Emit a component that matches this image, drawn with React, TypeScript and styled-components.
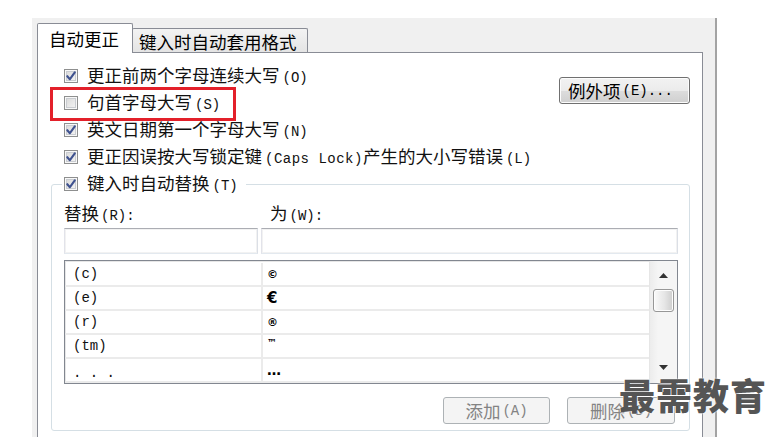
import React from 'react';
import styled, { createGlobalStyle, css } from 'styled-components';

const GlobalStyle = createGlobalStyle`
  html, body {
    margin: 0;
    padding: 0;
    background: #fff;
    overflow: hidden;
  }
  body {
    font-family: "Noto Sans CJK SC", "Noto Sans", sans-serif;
    color: #111;
  }
`;

const Stage = styled.div`
  position: relative;
  width: 777px;
  height: 437px;
  padding: 18px 0 0 32px;
  box-sizing: border-box;
`;

const Window = styled.div`
  width: 685px;
  height: 430px;
  box-sizing: border-box;
  background: #f0f0f0;
  border-right: 2px solid #a3a3a3;
  padding: 5px 12px 0 5px;
  display: flex;
  flex-direction: column;
`;

const TabStrip = styled.div`
  display: flex;
  align-items: flex-end;
  height: 30px;
  position: relative;
  z-index: 1;
  margin-bottom: -1px;
`;

const Tab = styled.div<{ $active?: boolean }>`
  box-sizing: border-box;
  display: flex;
  align-items: center;
  font-size: 17.5px;
  line-height: 1;
  color: #000;
  border: 1px solid #898c95;
  border-bottom: none;
  border-radius: 2px 2px 0 0;
  ${p => p.$active
    ? css`
        height: 30px;
        width: 96px;
        padding-left: 11px;
        background: #fff;
        position: relative;
        z-index: 2;
      `
    : css`
        height: 24px;
        width: 176px;
        margin-left: -1px;
        margin-bottom: 1px;
        padding: 2px 0 0 6px;
        background: linear-gradient(#f3f3f3, #e4e4e4);
      `}
`;

const Panel = styled.div`
  position: relative;
  flex: 1;
  background: #fff;
  border: 1px solid #898c95;
  border-bottom: none;
  padding: 9px 12px 0 13px;
`;

const TopArea = styled.div`
  display: flex;
  justify-content: space-between;
  align-items: flex-start;
`;

const CheckList = styled.div`
  display: flex;
  flex-direction: column;
  padding-left: 13px;
`;

const CheckRow = styled.div<{ $legend?: boolean }>`
  display: flex;
  align-items: center;
  gap: 9px;
  height: 27px;
  font-size: 17.5px;
  line-height: 1;
  white-space: nowrap;
  ${p => p.$legend && css`
    align-self: flex-start;
    margin: -15px 0 0 -2px;
    padding: 0 8px 0 2px;
    background: #fff;
  `}
`;

const Box = styled.span`
  width: 14px;
  height: 14px;
  box-sizing: border-box;
  flex: none;
  border: 1px solid #8e8f8f;
  background: linear-gradient(135deg, #d6d6d6, #f7f7f7);
  box-shadow: inset 0 0 0 1px #f8f8f8, inset 0 0 0 2px #c9ccd1;
  display: flex;
  align-items: center;
  justify-content: center;
`;

const Acc = styled.span<{ $gap?: number }>`
  font-family: "Liberation Mono", monospace;
  font-size: 14px;
  margin-left: ${p => p.$gap ?? 3}px;
`;

const Caps = styled(Acc)`
  letter-spacing: 0.5px;
`;

const Button = styled.div<{ $disabled?: boolean; $w: number }>`
  box-sizing: border-box;
  width: ${p => p.$w}px;
  height: 27px;
  border-radius: 3px;
  display: flex;
  align-items: center;
  font-size: 17.5px;
  line-height: 1;
  white-space: nowrap;
  ${p => p.$disabled
    ? css`
        border: 1px solid #adb2b5;
        background: #f4f4f4;
        color: #838383;
        justify-content: center;
      `
    : css`
        border: 1px solid #707070;
        background: linear-gradient(#f2f2f2 0%, #ebebeb 50%, #dddddd 51%, #cfcfcf 100%);
        box-shadow: inset 0 0 0 1px #fcfcfc;
        color: #000;
        padding-left: 8px;
      `}
`;

const ExceptionButton = styled(Button)`
  margin-top: 15px;
`;

const Group = styled.div`
  margin-top: 14px;
  border: 1px solid #d5dfe5;
  border-radius: 3px;
  padding: 0 11px 6px 12px;
  display: flex;
  flex-direction: column;
`;

const Labels = styled.div`
  margin-top: 6px;
  height: 20px;
  display: grid;
  grid-template-columns: 206px 1fr;
  align-items: center;
  font-size: 17.5px;
  line-height: 1;
`;

const Inputs = styled.div`
  margin-top: 5px;
  display: flex;
  gap: 3px;
`;

const Field = styled.div<{ $w?: number }>`
  box-sizing: border-box;
  height: 26px;
  ${p => (p.$w ? `width: ${p.$w}px;` : 'flex: 1;')}
  border: 1px solid #abadb3;
  border-color: #abadb3 #dbdfe6 #e3e9ef #e2e3ea;
  box-shadow: inset 0 0 0 1px #f2f2f2;
  background: #fff;
`;

const ListBox = styled.div`
  margin-top: 6px;
  height: 124px;
  box-sizing: border-box;
  border: 1px solid #828790;
  box-shadow: inset 0 0 0 1px #e6e6e6;
  display: flex;
  background: #fff;
`;

const Table = styled.div`
  flex: 1;
  padding-top: 2px;
`;

const ListRow = styled.div`
  display: grid;
  grid-template-columns: 198px 1fr;
  height: 24px;
  box-sizing: border-box;
  border-bottom: 2px solid #ebebeb;
`;

const FromCell = styled.div<{ $bottom?: boolean }>`
  display: flex;
  align-items: ${p => (p.$bottom ? 'flex-end' : 'center')};
  padding: 0 0 ${p => (p.$bottom ? 1 : 0)}px 8px;
  border-right: 2px solid #ebebeb;
  font-family: "Liberation Mono", monospace;
  font-size: 14px;
  line-height: 1;
  color: #111;
`;

const ToCell = styled.div<{ $size: number; $top?: boolean }>`
  display: flex;
  align-items: ${p => (p.$top ? 'flex-start' : 'center')};
  padding: ${p => (p.$top ? 3 : 0)}px 0 0 4px;
  font-family: "DejaVu Sans", sans-serif;
  font-weight: bold;
  font-size: ${p => p.$size}px;
  line-height: 1;
  color: #000;
`;

const ScrollBar = styled.div`
  width: 27px;
  flex: none;
  display: flex;
  flex-direction: column;
  align-items: center;
  border-left: 1px solid #e6e6e6;
  background: linear-gradient(90deg, #ececec, #f5f5f5 30%, #f5f5f5);
`;

const Arrow = styled.svg<{ $down?: boolean }>`
  flex: none;
  ${p => (p.$down ? 'margin: auto 0 13px;' : 'margin-top: 12px;')}
`;

const Thumb = styled.div`
  margin-top: 11px;
  width: 21px;
  height: 23px;
  box-sizing: border-box;
  border: 1px solid #979797;
  border-radius: 3px;
  background: linear-gradient(90deg, #fafafa, #e6e6e6 55%, #cdcdcd);
  box-shadow: inset 0 0 0 1px #fdfdfd;
`;

const Actions = styled.div`
  margin-top: 13px;
  display: flex;
  justify-content: flex-end;
  gap: 17px;
  padding-right: 3px;
`;

const Highlight = styled.div`
  position: absolute;
  left: 12px;
  top: 34px;
  width: 186px;
  height: 34px;
  box-sizing: border-box;
  border: 3px solid #e3202a;
  pointer-events: none;
`;

const Watermark = styled.div`
  position: absolute;
  left: 619px;
  top: 376px;
  font-family: "Noto Sans CJK SC", sans-serif;
  font-weight: 900;
  font-size: 36px;
  line-height: 36px;
  letter-spacing: 1px;
  color: #555;
  text-shadow: 0 0 2px #fff, 0 0 1px #fff;
`;

const Check = ({ on }: { on?: boolean }) => (
  <Box>
    {on && (
      <svg width="12" height="12" viewBox="0 0 12 12">
        <path d="M2.3 6.2 L4.9 9.2 L9.8 2.4" fill="none" stroke="#3f528f" strokeWidth="2.1" strokeLinecap="round" strokeLinejoin="round" />
      </svg>
    )}
  </Box>
);

const rows = [
  { from: '(c)', to: '©', size: 11 },
  { from: '(e)', to: '€', size: 15 },
  { from: '(r)', to: '®', size: 11 },
  { from: '(tm)', to: '™', size: 10, top: true },
  { from: '. . .', to: '…', size: 14, bottom: true },
];

export default function App() {
  return (
    <Stage>
      <GlobalStyle />
      <Window>
        <TabStrip>
          <Tab $active>自动更正</Tab>
          <Tab>键入时自动套用格式</Tab>
        </TabStrip>
        <Panel>
          <TopArea>
            <CheckList>
              <CheckRow>
                <Check on />
                <span>更正前两个字母连续大写<Acc>(O)</Acc></span>
              </CheckRow>
              <CheckRow>
                <Check />
                <span>句首字母大写<Acc>(S)</Acc></span>
              </CheckRow>
              <CheckRow>
                <Check on />
                <span>英文日期第一个字母大写<Acc>(N)</Acc></span>
              </CheckRow>
              <CheckRow>
                <Check on />
                <span>更正因误按大写锁定键<Caps>(Caps Lock)</Caps>产生的大小写错误<Acc>(L)</Acc></span>
              </CheckRow>
            </CheckList>
            <ExceptionButton $w={131}>
              例外项<Acc $gap={2}>(E)...</Acc>
            </ExceptionButton>
          </TopArea>

          <Group>
            <CheckRow $legend>
              <Check on />
              <span>键入时自动替换<Acc>(T)</Acc></span>
            </CheckRow>
            <Labels>
              <span>替换<Acc $gap={2}>(R):</Acc></span>
              <span>为<Acc $gap={2}>(W):</Acc></span>
            </Labels>
            <Inputs>
              <Field $w={194} />
              <Field />
            </Inputs>
            <ListBox>
              <Table>
                {rows.map(r => (
                  <ListRow key={r.from}>
                    <FromCell $bottom={r.bottom}>{r.from}</FromCell>
                    <ToCell $size={r.size} $top={r.top}>{r.to}</ToCell>
                  </ListRow>
                ))}
              </Table>
              <ScrollBar>
                <Arrow width="9" height="5" viewBox="0 0 9 5">
                  <path d="M0 5 L4.5 0 L9 5 Z" fill="#333" />
                </Arrow>
                <Thumb />
                <Arrow $down width="9" height="5" viewBox="0 0 9 5">
                  <path d="M0 0 L4.5 5 L9 0 Z" fill="#333" />
                </Arrow>
              </ScrollBar>
            </ListBox>
            <Actions>
              <Button $disabled $w={107}>添加<Acc $gap={2}>(A)</Acc></Button>
              <Button $disabled $w={108}>删除<Acc $gap={2}>(D)</Acc></Button>
            </Actions>
          </Group>
          <Highlight />
        </Panel>
      </Window>
      <Watermark>最需教育</Watermark>
    </Stage>
  );
}
